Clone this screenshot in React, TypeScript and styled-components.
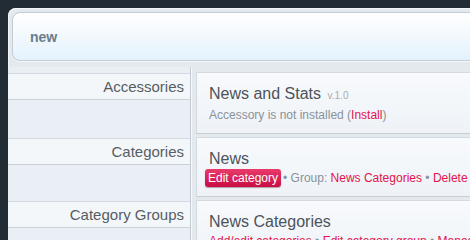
import React from 'react';
import styled, { createGlobalStyle } from 'styled-components';

const Global = createGlobalStyle`
  *, *::before, *::after { box-sizing: border-box; }
  html, body { margin: 0; padding: 0; background: #212c35; overflow: hidden; }
  body { font-family: "Liberation Sans", Arial, Helvetica, sans-serif; }
`;

const Page = styled.div`
  padding: 8px 0 0 8px;
  width: 640px;
  height: 240px;
`;

const Shell = styled.div`
  height: 100%;
  background: #e4e9ee;
  border-radius: 8px 0 0 0;
  box-shadow: inset 1px 1px 0 #f3f6f8;
  display: flex;
  flex-direction: column;
`;

const Header = styled.div`
  margin: 4px 0 0 4px;
  height: 49px;
  flex: none;
  border: 1px solid #c3ccd4;
  border-radius: 8px;
  background: linear-gradient(#ffffff, #e4f2fc);
  box-shadow: 0 1px 0 #f6f8fa;
  display: flex;
  align-items: center;
  padding-left: 17px;
  font-size: 14px;
  font-weight: bold;
  color: #6d7c88;
`;

const Main = styled.div`
  margin-top: 6px;
  display: flex;
  flex-direction: column;
`;

const Row = styled.div`
  display: grid;
  grid-template-columns: 183px 1fr;
`;

const SideCell = styled.div<{ $first?: boolean }>`
  background: #e9eff5;
  border-right: 1px solid #c2cbd3;
  box-shadow: 1px 0 0 #f6f9fb;
  padding-top: ${(p) => (p.$first ? 6 : 1)}px;
`;

const SideLabel = styled.div`
  height: 27px;
  background: #f4f7fa;
  border-top: 1px solid #d3dae0;
  border-bottom: 1px solid #c9d1d8;
  text-align: right;
  padding-right: 6px;
  font-size: 15px;
  line-height: 25px;
  color: #575d63;
`;

const ContentCell = styled.div<{ $first?: boolean }>`
  padding: ${(p) => (p.$first ? 5 : 0)}px 0 0 5px;
`;

const Card = styled.div`
  margin-bottom: 3px;
  padding: 10px 12px 9px;
  border: 1px solid #d3dae1;
  border-bottom-color: #c6ced6;
  background: linear-gradient(#f8fafc, #eef2f7);
`;

const Title = styled.div`
  font-size: 16px;
  line-height: 21px;
  color: #4b535b;
  white-space: nowrap;
`;

const Version = styled.span`
  font-size: 10px;
  color: #a6adb5;
  margin-left: 2px;
`;

const Sub = styled.div`
  font-size: 12px;
  line-height: 18px;
  height: 18px;
  color: #8a929a;
  white-space: nowrap;
`;

const Link = styled.a`
  color: #e2144b;
  text-decoration: none;
`;

const Badge = styled.span`
  display: inline-block;
  vertical-align: top;
  height: 18px;
  line-height: 18px;
  margin: 0 2px 0 -4px;
  padding: 0 3px;
  border-radius: 3px;
  background: linear-gradient(#ea3a6c, #c80d44);
  box-shadow: 0 1px 1px rgba(60, 0, 20, 0.35);
  color: #ffffff;
`;

const Dot = styled.span`
  color: #8c959e;
`;

export default function App() {
  return (
    <>
      <Global />
      <Page>
        <Shell>
          <Header>new</Header>
          <Main>
            <Row>
              <SideCell $first>
                <SideLabel>Accessories</SideLabel>
              </SideCell>
              <ContentCell $first>
                <Card>
                  <Title>
                    News and Stats <Version>v.1.0</Version>
                  </Title>
                  <Sub>
                    Accessory is not installed (<Link>Install</Link>)
                  </Sub>
                </Card>
              </ContentCell>
            </Row>
            <Row>
              <SideCell>
                <SideLabel>Categories</SideLabel>
              </SideCell>
              <ContentCell>
                <Card>
                  <Title>News</Title>
                  <Sub>
                    <Badge>Edit category</Badge><Dot>•</Dot> Group: <Link>News Categories</Link> <Dot>•</Dot>{' '}
                    <Link>Delete</Link>
                  </Sub>
                </Card>
              </ContentCell>
            </Row>
            <Row>
              <SideCell>
                <SideLabel>Category Groups</SideLabel>
              </SideCell>
              <ContentCell>
                <Card>
                  <Title>News Categories</Title>
                  <Sub>
                    <Link>Add/edit categories</Link> <Dot>•</Dot> <Link>Edit category group</Link> <Dot>•</Dot>{' '}
                    <Link>Manage custom fields</Link>
                  </Sub>
                </Card>
              </ContentCell>
            </Row>
          </Main>
        </Shell>
      </Page>
    </>
  );
}
